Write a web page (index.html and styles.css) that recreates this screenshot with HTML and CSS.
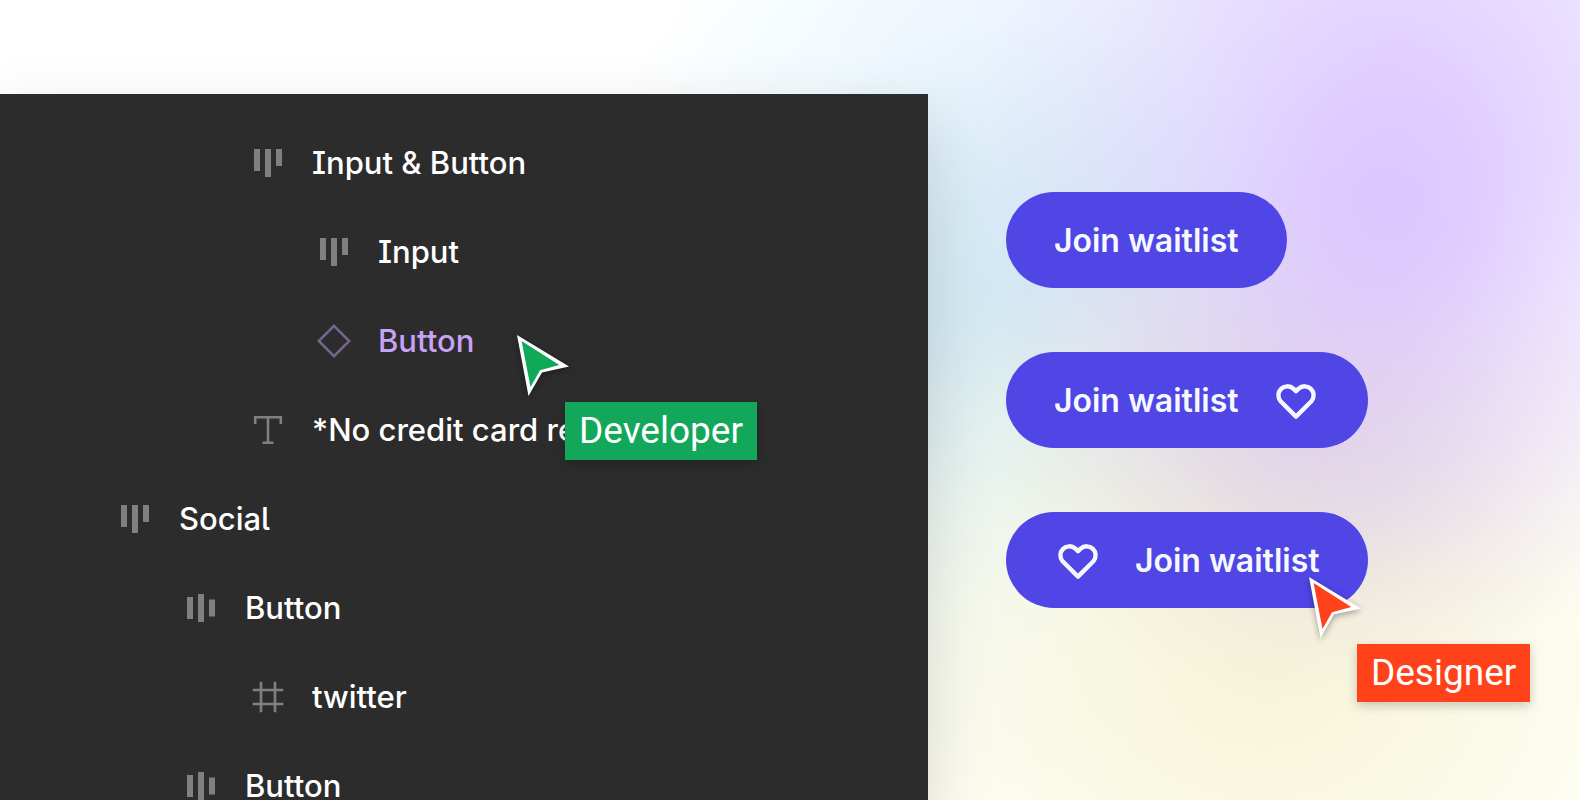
FILE: index.html
```html
<!DOCTYPE html>
<html lang="en">
<head>
  <meta charset="UTF-8">
  <meta name="viewport" content="width=device-width, initial-scale=1">
  <title>Developer and designer handoff</title>
  <link rel="stylesheet" href="styles.css">
</head>
<body>
  <!-- Shared icons -->
  <svg class="sprite" aria-hidden="true">
    <symbol id="layout-top" viewBox="0 0 34 34">
      <path d="M3 3h6v22h-6zM14 3h6v28h-6zM25 3h6v17h-6z" fill="currentColor"/>
    </symbol>
    <symbol id="layout-center" viewBox="0 0 34 34">
      <path d="M3 6h6v22h-6zM14 3h6v28h-6zM25 8.500h6v17h-6z" fill="currentColor"/>
    </symbol>
    <symbol id="component" viewBox="0 0 34 34">
      <path d="M17 1.800L32.200 17L17 32.200L1.800 17Z" fill="none" stroke="currentColor" stroke-width="2.500"/>
    </symbol>
    <symbol id="text" viewBox="0 0 34 34">
      <path d="M4.200 11V4.300H29.800V11M17 4.300V29.700M11.500 29.700H22.500" fill="none" stroke="currentColor" stroke-width="2.600"/>
    </symbol>
    <symbol id="frame" viewBox="0 0 34 34">
      <path d="M10 1.700V32.300M24 1.700V32.300M1.700 10H32.300M1.700 24H32.300" fill="none" stroke="currentColor" stroke-width="2.600"/>
    </symbol>
    <symbol id="heart" viewBox="0 0 24 24">
      <path d="M12 20.300L4.300 12.600A4.500 4.500 0 0 1 10.700 6.300L12 7.600L13.300 6.300A4.500 4.500 0 0 1 19.700 12.600Z" fill="none" stroke="currentColor" stroke-width="2.200" stroke-linejoin="round"/>
    </symbol>
    <symbol id="arrow" viewBox="0 0 52 61">
      <path d="M0 0L52 31.500L25 37.500L11.500 61Z" fill="#fff"/>
      <path d="M4.600 6L42.300 30L23 35.300L13.500 52Z" fill="currentColor"/>
    </symbol>
  </svg>

  <main class="stage">
    <section class="layers">
      <ul class="tree">
        <li class="layer level-3"><svg class="icon"><use href="#layout-top"/></svg>Input &amp; Button</li>
        <li class="layer level-4"><svg class="icon"><use href="#layout-top"/></svg>Input</li>
        <li class="layer level-4 selected"><svg class="icon"><use href="#component"/></svg>Button</li>
        <li class="layer level-3"><svg class="icon"><use href="#text"/></svg>*No credit card re</li>
        <li class="layer level-1"><svg class="icon"><use href="#layout-top"/></svg>Social</li>
        <li class="layer level-2"><svg class="icon"><use href="#layout-center"/></svg>Button</li>
        <li class="layer level-3"><svg class="icon"><use href="#frame"/></svg>twitter</li>
        <li class="layer level-2"><svg class="icon"><use href="#layout-center"/></svg>Button</li>
      </ul>
      <div class="pointer developer">
        <svg class="arrow"><use href="#arrow"/></svg>
        <span class="tag">Developer</span>
      </div>
    </section>

    <section class="variants">
      <button class="btn" type="button">Join waitlist</button>
      <button class="btn" type="button">Join waitlist <svg class="heart"><use href="#heart"/></svg></button>
      <div class="variant">
        <button class="btn" type="button"><svg class="heart"><use href="#heart"/></svg> Join waitlist</button>
        <div class="pointer designer">
          <svg class="arrow"><use href="#arrow"/></svg>
          <span class="tag">Designer</span>
        </div>
      </div>
    </section>
  </main>
</body>
</html>
```
FILE: styles.css
```css
* {
  box-sizing: border-box;
}
body {
  margin: 0;
  font-family: Inter, sans-serif;
}
.sprite {
  display: none;
}

/* Soft colour wash behind everything */
.stage {
  display: grid;
  grid-template-columns: 37fr 26fr;
  height: 100vh;
  overflow: hidden;
  background:
    radial-gradient(ellipse 27% 58% at 88% 25%, rgba(216, 190, 255, 0.85), rgba(217, 192, 255, 0.75) 20%, rgba(220, 198, 255, 0.45) 50%, rgba(224, 206, 255, 0.18) 78%, rgba(230, 216, 255, 0) 100%),
    radial-gradient(ellipse 20% 34% at 83% 54%, rgba(214, 200, 208, 0.6), rgba(216, 204, 208, 0.48) 30%, rgba(222, 210, 208, 0.18) 70%, rgba(225, 215, 210, 0) 100%),
    radial-gradient(ellipse 34% 56% at 80% 84%, rgba(248, 243, 216, 0.95), rgba(249, 247, 220, 0.85) 30%, rgba(252, 251, 228, 0.4) 70%, rgba(254, 252, 235, 0) 100%),
    radial-gradient(ellipse 30% 60% at 65% 41%, rgba(204, 230, 240, 0.95), rgba(208, 232, 244, 0.8) 30%, rgba(224, 242, 252, 0.4) 65%, rgba(238, 250, 255, 0) 100%),
    radial-gradient(ellipse 46% 46% at 88% 0%, rgba(236, 228, 255, 0.9), rgba(240, 238, 255, 0.7) 45%, rgba(246, 254, 255, 0.4) 80%, rgba(250, 255, 255, 0) 100%),
    #fff;
}

/* Layers panel */
.layers {
  position: relative;
  margin-top: 94px;
  background: #2c2c2c;
  box-shadow: 0 24px 64px rgba(0, 0, 0, 0.14);
}
.tree {
  margin: 0;
  padding: 24px 0 0;
  list-style: none;
}
.layer {
  display: flex;
  align-items: center;
  gap: 27px;
  height: 89px;
  color: #fff;
  font-size: 31px;
  font-weight: 500;
  white-space: nowrap;
  font-variant-ligatures: none;
  font-feature-settings: "ss02", "cv05", "cv08";
}
.level-1 { padding-left: 118px; }
.level-2 { padding-left: 184px; }
.level-3 { padding-left: 251px; }
.level-4 { padding-left: 317px; }
.icon {
  flex: none;
  width: 34px;
  height: 34px;
  color: #808080;
}
.selected {
  color: #c9a2f7;
}
.selected .icon {
  color: #75658f;
}

/* Button variants */
.variants {
  display: flex;
  flex-direction: column;
  align-items: flex-start;
  gap: 64px;
  padding: 192px 0 0 78px;
}
.variant {
  position: relative;
}
.btn {
  display: flex;
  align-items: center;
  gap: 33px;
  height: 96px;
  padding: 0 48px;
  border: 0;
  border-radius: 48px;
  background: #4f46e5;
  color: #f5f8ff;
  font-family: inherit;
  font-size: 32px;
  font-weight: 600;
  white-space: nowrap;
}
.heart {
  width: 48px;
  height: 48px;
}

/* Multiplayer cursors */
.pointer {
  position: absolute;
}
.arrow {
  display: block;
  width: 52px;
  height: 61px;
  overflow: visible;
  filter: drop-shadow(0 2px 3px rgba(0, 0, 0, 0.35));
}
.tag {
  display: block;
  margin: 6px 0 0 48px;
  padding: 0 14px;
  font-family: Roboto, sans-serif;
  font-size: 37px;
  line-height: 58px;
  box-shadow: 0 4px 10px rgba(0, 0, 0, 0.2);
}
.developer {
  top: 241px;
  left: 517px;
  color: #0fa958;
}
.developer .tag {
  background: #12a75a;
}
.designer {
  top: 65px;
  left: 303px;
  color: #ff421a;
}
.designer .tag {
  background: #ff421a;
}
.pointer .tag {
  color: #fff;
}
```
